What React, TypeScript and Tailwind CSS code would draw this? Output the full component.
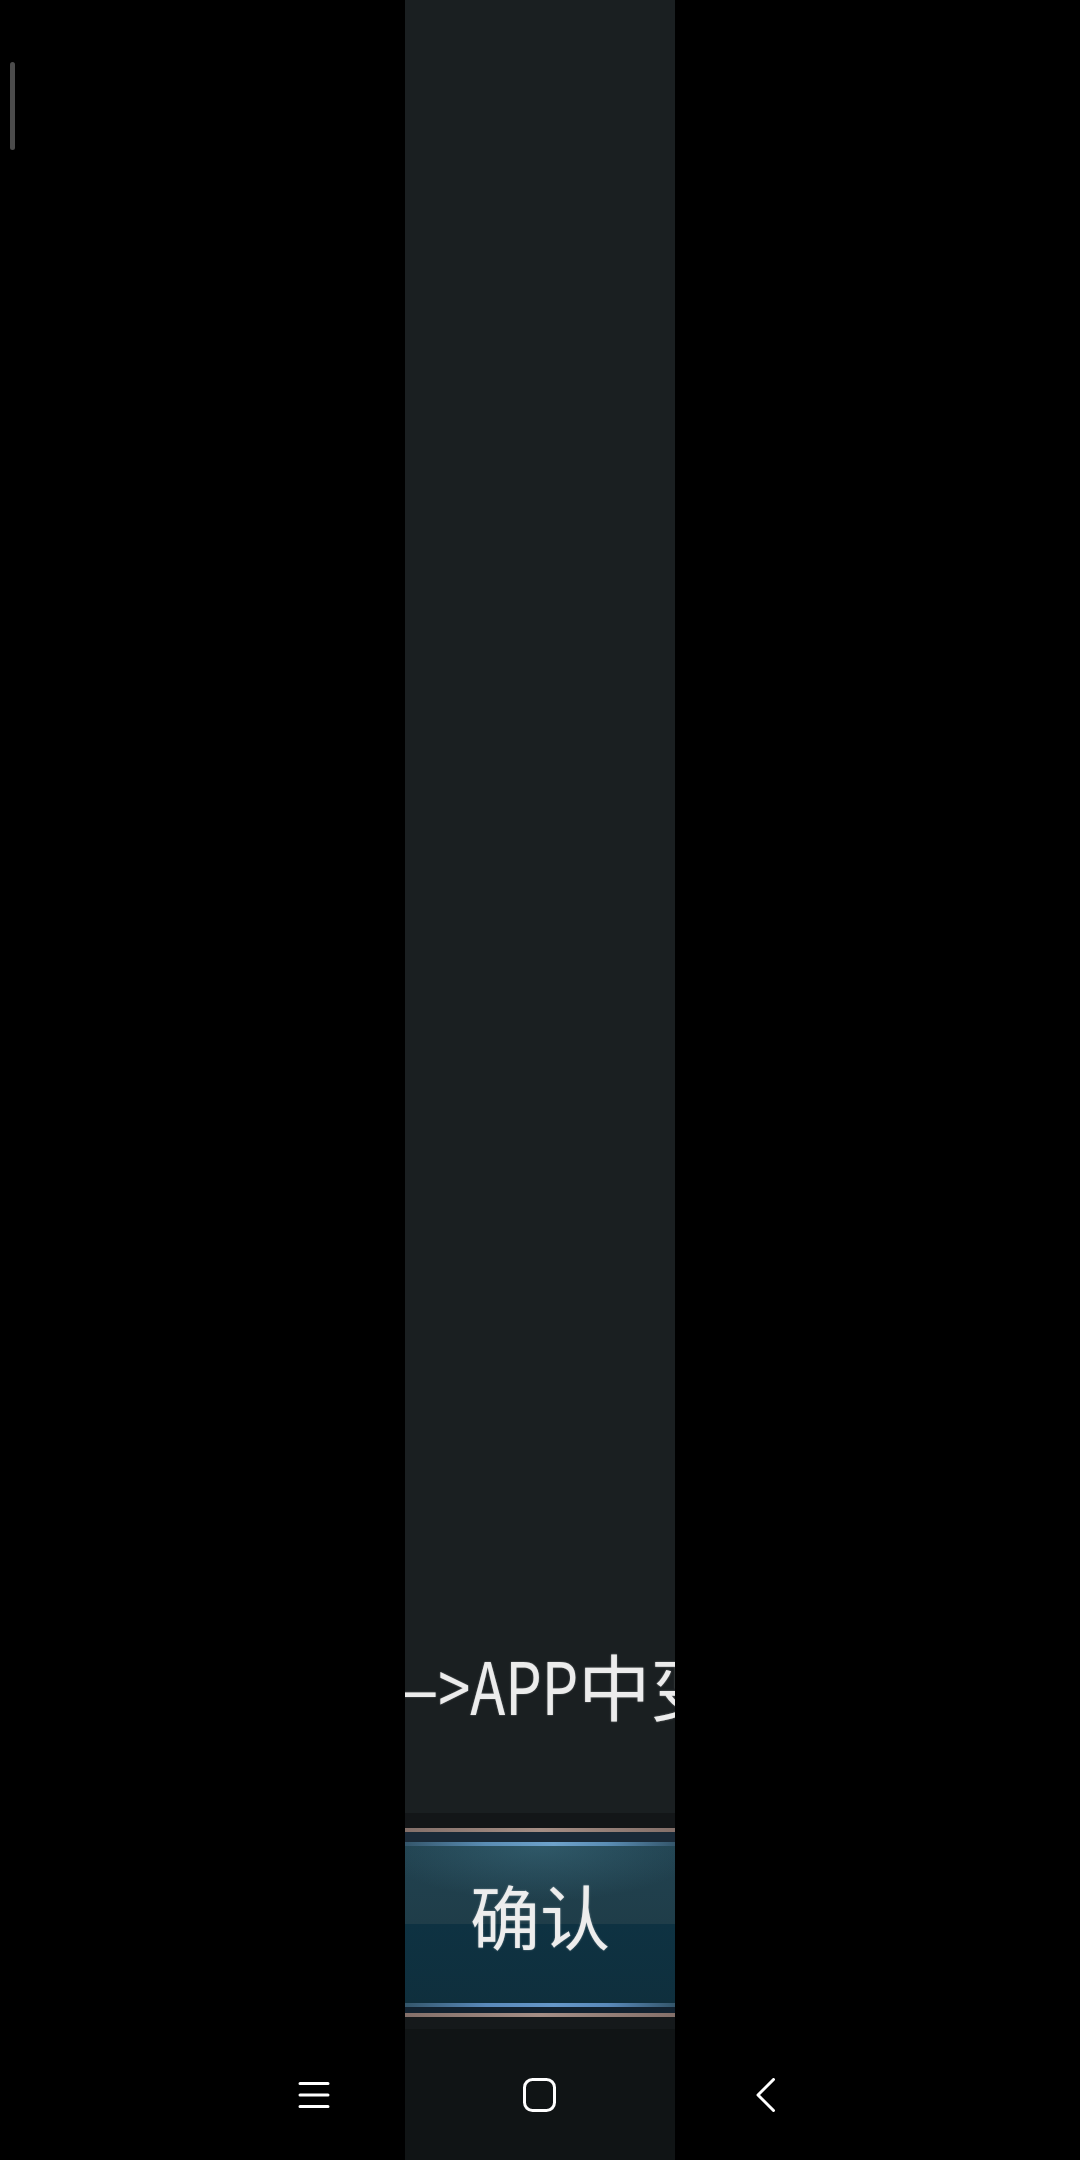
export default function App() {
  return (
    <div className="relative flex h-[2160px] w-[1080px] flex-col bg-black" style={{ fontFamily: '"Noto Sans CJK SC", sans-serif' }}>
      {/* scroll indicator */}
      <div className="absolute left-[10px] top-[62px] h-[88px] w-[5px] rounded-full bg-[#4b4b4b]" />

      {/* app column */}
      <div className="flex flex-1 justify-center">
        <div className="flex w-[270px] flex-col bg-[#1a1f21]">
          <div className="flex-1" />

          {/* clipped hint line */}
          <div className="mb-[79px] h-[100px] overflow-hidden whitespace-nowrap">
            <div className="ml-[-66px] text-[72px] leading-[100px] text-[#ececec] [text-shadow:0_0_2px_rgba(255,255,255,0.45)]">
              <span className="inline-block origin-right scale-x-[0.8]">—&gt;APP</span>中变更权限
            </div>
          </div>

          {/* confirm button */}
          <div className="flex h-[216px] flex-col">
            <div className="h-[15px] bg-[#131618]" />
            <div className="h-[4px] bg-[linear-gradient(to_right,#84706a,#a58e85_50%,#84706a)]" />
            <div className="h-[10px] bg-[#1a2a38]" />
            <div className="h-[4px] bg-[linear-gradient(to_right,#34566b,#5a8db4_30%,#6ea3cc_55%,#5a8db4_75%,#34566b)]" />
            <div className="flex flex-1 items-center justify-center pb-[20px] bg-[radial-gradient(ellipse_60%_35%_at_50%_0%,rgba(80,140,160,0.3),transparent),linear-gradient(to_bottom,#214250,#1f3d49_49.6%,#0e3242_50%,#0f2f3d)]">
              <span className="text-[70px] leading-none text-[#ededed] [text-shadow:0_0_2px_rgba(255,255,255,0.45)]">确认</span>
            </div>
            <div className="h-[4px] bg-[linear-gradient(to_right,#34566b,#5a8abb_30%,#6698c9_55%,#5a8abb_75%,#34566b)]" />
            <div className="h-[6px] bg-[#122230]" />
            <div className="h-[4px] bg-[linear-gradient(to_right,#84706a,#a58e85_50%,#84706a)]" />
            <div className="h-[12px] bg-[#15191b]" />
          </div>
        </div>
      </div>

      {/* system nav bar */}
      <div className="flex h-[131px] items-center justify-center bg-[linear-gradient(to_right,#000_405px,#101415_405px,#101415_675px,#000_675px)]">
        <div className="flex w-[226px] justify-center">
          <svg width="32" height="28" viewBox="0 0 32 28" fill="none" stroke="#ffffff" strokeWidth="3" strokeLinecap="round">
            <path d="M2 2.5h28M2 14h28M2 25.5h28" />
          </svg>
        </div>
        <div className="flex w-[226px] justify-center">
          <svg width="34" height="34" viewBox="0 0 34 34" fill="none" stroke="#ffffff" strokeWidth="3">
            <rect x="1.5" y="1.5" width="30" height="31" rx="8" />
          </svg>
        </div>
        <div className="flex w-[226px] justify-center">
          <svg width="20" height="34" viewBox="0 0 20 34" fill="none" stroke="#ffffff" strokeWidth="3" strokeLinecap="round" strokeLinejoin="round">
            <path d="M17.5 1.5L2 17l15.5 15.5" />
          </svg>
        </div>
      </div>
    </div>
  );
}
